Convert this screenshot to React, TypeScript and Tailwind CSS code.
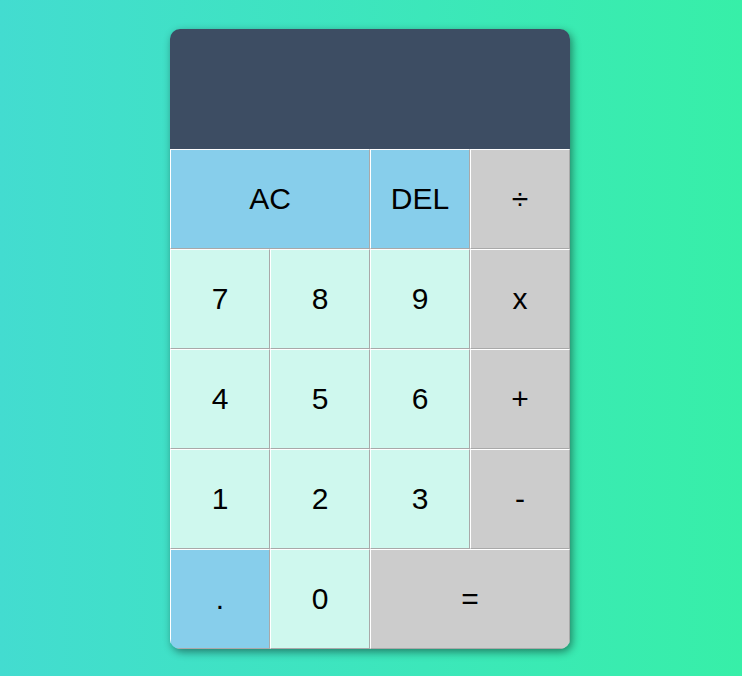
import React from 'react';

type Key = { label: string; kind: 'num' | 'op' | 'fn'; span?: boolean };

const keys: Key[] = [
  { label: 'AC', kind: 'fn', span: true },
  { label: 'DEL', kind: 'fn' },
  { label: '÷', kind: 'op' },
  { label: '7', kind: 'num' },
  { label: '8', kind: 'num' },
  { label: '9', kind: 'num' },
  { label: 'x', kind: 'op' },
  { label: '4', kind: 'num' },
  { label: '5', kind: 'num' },
  { label: '6', kind: 'num' },
  { label: '+', kind: 'op' },
  { label: '1', kind: 'num' },
  { label: '2', kind: 'num' },
  { label: '3', kind: 'num' },
  { label: '-', kind: 'op' },
  { label: '.', kind: 'fn' },
  { label: '0', kind: 'num' },
  { label: '=', kind: 'op', span: true },
];

const bg = {
  num: 'bg-[#cff8ee]',
  op: 'bg-[#cccccc]',
  fn: 'bg-[#87ceeb]',
};

export default function App() {
  return (
    <div className="min-h-screen w-full flex items-center justify-center bg-gradient-to-r from-[#43dcd0] to-[#37efa8] font-['Liberation_Sans',Arial,sans-serif]">
      <div className="w-[400px] -translate-x-px translate-y-px rounded-[10px] overflow-hidden shadow-[2px_3px_9px_rgba(0,0,0,0.45)]">
        {/* Display */}
        <div className="h-[120px] bg-[#3d4d63] flex flex-col items-end justify-end px-4 py-3 text-white"></div>

        {/* Keypad */}
        <div className="grid grid-cols-4">
          {keys.map((k) => (
            <button
              key={k.label}
              className={`h-[100px] pb-[2px] border border-t-white border-l-white border-r-[#a9a9a9] border-b-[#a9a9a9] text-[30px] text-black ${bg[k.kind]} ${k.span ? 'col-span-2' : ''}`}
            >
              {k.label}
            </button>
          ))}
        </div>
      </div>
    </div>
  );
}
